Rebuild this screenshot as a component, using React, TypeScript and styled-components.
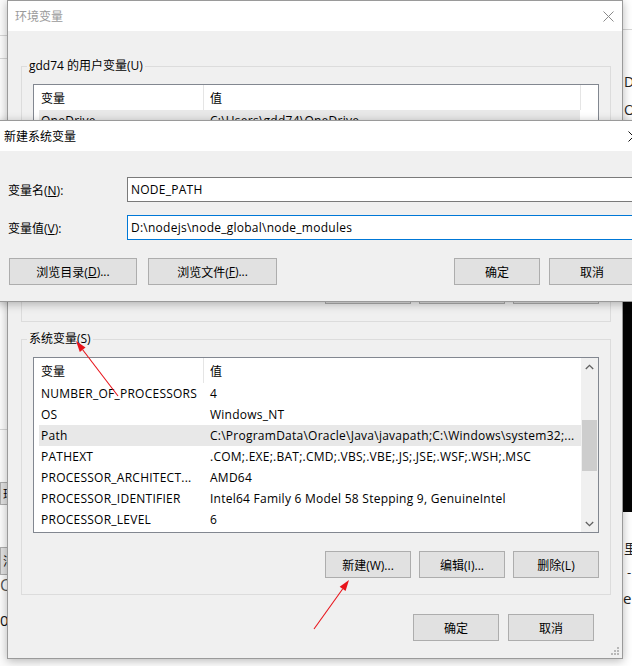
import React from 'react'
import styled, { createGlobalStyle } from 'styled-components'

type EnvVar = {
  readonly name: string
  readonly value: string
  readonly selected?: boolean
}

const userVars: EnvVar[] = [
  { name: 'OneDrive', value: 'C:\\Users\\gdd74\\OneDrive', selected: true },
  { name: 'Path', value: 'C:\\Users\\gdd74\\AppData\\Local\\Microsoft\\WindowsApps;' },
  { name: 'TEMP', value: 'C:\\Users\\gdd74\\AppData\\Local\\Temp' },
  { name: 'TMP', value: 'C:\\Users\\gdd74\\AppData\\Local\\Temp' },
]

const systemVars: EnvVar[] = [
  { name: 'NUMBER_OF_PROCESSORS', value: '4' },
  { name: 'OS', value: 'Windows_NT' },
  { name: 'Path', value: 'C:\\ProgramData\\Oracle\\Java\\javapath;C:\\Windows\\system32;...', selected: true },
  { name: 'PATHEXT', value: '.COM;.EXE;.BAT;.CMD;.VBS;.VBE;.JS;.JSE;.WSF;.WSH;.MSC' },
  { name: 'PROCESSOR_ARCHITECT...', value: 'AMD64' },
  { name: 'PROCESSOR_IDENTIFIER', value: 'Intel64 Family 6 Model 58 Stepping 9, GenuineIntel' },
  { name: 'PROCESSOR_LEVEL', value: '6' },
]

const GlobalStyle = createGlobalStyle`
  html, body { margin: 0; padding: 0; background: #fff; }
  body {
    font-family: 'Open Sans', 'Noto Sans CJK SC', sans-serif;
    font-size: 12px;
    color: #000;
  }
  * { box-sizing: border-box; }
`

const Desktop = styled.div`
  position: relative;
  width: 632px;
  height: 666px;
  overflow: hidden;
  background: #fff;
`

/* windows peeking out behind the dialog */
const LeftBackdrop = styled.div`
  position: absolute;
  left: 0;
  top: 0;
  width: 40px;
  height: 100%;
  display: flex;
  flex-direction: column;
  background: #fbfbfb;
`

const RightBackdrop = styled.div`
  position: absolute;
  left: 590px;
  top: 0;
  width: 42px;
  height: 100%;
  display: flex;
  flex-direction: column;
  background: #fff;
`

const BackRow = styled.div<{ $h: number; $line?: boolean }>`
  flex: none;
  height: ${(p) => p.$h}px;
  border-bottom: ${(p) => (p.$line ? '1px solid #d6d6d6' : 'none')};
`

const BackPanel = styled.div<{ $h?: number; $dark?: boolean }>`
  flex: ${(p) => (p.$h ? 'none' : '1')};
  height: ${(p) => (p.$h ? `${p.$h}px` : 'auto')};
  background: ${(p) => (p.$dark ? '#050505' : 'transparent')};
  display: flex;
  flex-direction: column;
  overflow: hidden;
`

const PeekText = styled.div<{ $top: number; $indent: number; $size?: number; $color?: string }>`
  flex: none;
  margin-top: ${(p) => p.$top}px;
  padding-left: ${(p) => p.$indent}px;
  height: 16px;
  line-height: 16px;
  font-size: ${(p) => p.$size ?? 12}px;
  color: ${(p) => p.$color ?? '#222'};
  white-space: nowrap;
`

const PeekButton = styled.div<{ $top: number; $h: number }>`
  flex: none;
  margin-top: ${(p) => p.$top}px;
  height: ${(p) => p.$h}px;
  display: flex;
  align-items: center;
  padding-left: 2px;
  background: #e1e1e1;
  border: 1px solid #adadad;
  white-space: nowrap;
`

/* generic window chrome */
const Window = styled.section<{ $left: number; $top: number; $w: number; $h?: number; $z: number }>`
  position: absolute;
  left: ${(p) => p.$left}px;
  top: ${(p) => p.$top}px;
  width: ${(p) => p.$w}px;
  height: ${(p) => (p.$h ? `${p.$h}px` : 'auto')};
  z-index: ${(p) => p.$z};
  display: flex;
  flex-direction: column;
  background: #f0f0f0;
  border: 1px solid #9a9a9a;
  box-shadow: 0 2px 9px rgba(0, 0, 0, 0.28);
`

const TitleBar = styled.header<{ $inactive?: boolean }>`
  flex: none;
  height: 30px;
  display: flex;
  align-items: center;
  padding-left: 7px;
  background: #fff;
  color: ${(p) => (p.$inactive ? '#9a9a9a' : '#000')};
`

const TitleText = styled.span`
  flex: 1;
  white-space: nowrap;
`

const CloseButton = styled.div`
  flex: none;
  width: 28px;
  height: 30px;
  display: flex;
  align-items: center;
  justify-content: center;
`

const CloseIcon = ({ color }: { color: string }) => (
  <svg width="11" height="11" viewBox="0 0 11 11">
    <path d="M0.5 0.5 L10.5 10.5 M10.5 0.5 L0.5 10.5" stroke={color} strokeWidth="1" fill="none" />
  </svg>
)

/* main dialog body */
const MainBody = styled.div`
  flex: 1;
  display: flex;
  flex-direction: column;
  padding: 0 11px 0 13px;
  position: relative;
`

const GroupBox = styled.div<{ $top: number; $bottom: number }>`
  margin-top: ${(p) => p.$top}px;
  border: 1px solid #dcdcdc;
  padding: 0 11px ${(p) => p.$bottom}px 11px;
  display: flex;
  flex-direction: column;
`

const GroupCaption = styled.div`
  align-self: flex-start;
  margin: -9px 0 10px -6px;
  padding: 0 2px;
  height: 16px;
  line-height: 16px;
  background: #f0f0f0;
  white-space: nowrap;
`

const ListView = styled.div`
  height: 176px;
  display: flex;
  border: 1px solid #828790;
  background: #fff;
  overflow: hidden;
`

const ListContent = styled.div`
  flex: 1;
  min-width: 0;
  display: flex;
  flex-direction: column;
`

const ListRow = styled.div<{ $header?: boolean; $selected?: boolean }>`
  flex: none;
  display: grid;
  grid-template-columns: 165px 1fr;
  height: ${(p) => (p.$header ? 25 : 21)}px;
  margin-left: 5px;
  align-items: center;
  background: ${(p) => (p.$selected ? '#e8e8e8' : 'transparent')};
  white-space: nowrap;
  letter-spacing: ${(p) => (p.$header ? 0 : 0.25)}px;
`

const HeaderFiller = styled.div`
  flex: none;
  width: 1px;
  height: 25px;
  margin-right: 17px;
  background: #e5e5e5;
`

const NameCell = styled.div<{ $header?: boolean }>`
  height: 100%;
  display: flex;
  align-items: center;
  padding-left: 2px;
  border-right: ${(p) => (p.$header ? '1px solid #e5e5e5' : '1px solid transparent')};
  overflow: hidden;
  text-overflow: ellipsis;
`

const ValueCell = styled.div`
  padding-left: 6px;
  padding-right: 4px;
  overflow: hidden;
  text-overflow: ellipsis;
`

const ScrollBar = styled.div`
  flex: none;
  width: 17px;
  display: flex;
  flex-direction: column;
  background: #f0f0f0;
`

const ScrollArrow = styled.div`
  flex: none;
  height: 17px;
  display: flex;
  align-items: center;
  justify-content: center;
`

const ScrollTrack = styled.div`
  flex: 1;
  display: flex;
  flex-direction: column;
`

const ScrollThumb = styled.div<{ $offset: number; $size: number }>`
  margin: ${(p) => p.$offset}px 1px 0 1px;
  height: ${(p) => p.$size}px;
  background: #cdcdcd;
`

const Chevron = ({ up }: { up?: boolean }) => (
  <svg width="9" height="6" viewBox="0 0 9 6">
    <polyline
      points={up ? '0.8,5 4.5,1.3 8.2,5' : '0.8,1 4.5,4.7 8.2,1'}
      stroke="#606060"
      strokeWidth="1.3"
      fill="none"
    />
  </svg>
)

const ButtonRow = styled.div<{ $top: number; $gap: number; $right?: number }>`
  flex: none;
  display: flex;
  justify-content: flex-end;
  gap: ${(p) => p.$gap}px;
  margin-top: ${(p) => p.$top}px;
  margin-right: ${(p) => p.$right ?? 0}px;
`

const Button = styled.div<{ $w: number }>`
  flex: none;
  width: ${(p) => p.$w}px;
  height: 27px;
  display: flex;
  align-items: center;
  justify-content: center;
  background: #e1e1e1;
  border: 1px solid #adadad;
  white-space: nowrap;
`

const ResizeGrip = styled.svg`
  position: absolute;
  right: 2px;
  bottom: 2px;
`

/* new variable dialog */
const FormBody = styled.div`
  display: flex;
  flex-direction: column;
  padding: 26px 12px 16px 12px;
`

const FieldRow = styled.div<{ $top: number }>`
  display: flex;
  align-items: center;
  margin-top: ${(p) => p.$top}px;
`

const FieldLabel = styled.div`
  flex: none;
  width: 119px;
  margin-left: -1px;
  white-space: nowrap;
`

const TextBox = styled.div<{ $focused?: boolean }>`
  flex: 1;
  height: 25px;
  display: flex;
  align-items: center;
  padding-left: 3px;
  background: #fff;
  border: 1px solid ${(p) => (p.$focused ? '#0078d7' : '#7a7a7a')};
  white-space: nowrap;
  letter-spacing: 0.25px;
`

const DialogButtons = styled.div`
  display: flex;
  align-items: center;
  gap: 11px;
  margin-top: 18px;
`

const Spacer = styled.div`
  flex: 1;
`

const ConfirmGroup = styled.div`
  display: flex;
  gap: 9px;
`

const Annotations = styled.svg`
  position: absolute;
  left: 0;
  top: 0;
  z-index: 10;
  pointer-events: none;
`

const Arrow = ({ from, to }: { from: [number, number]; to: [number, number] }) => {
  const dx = to[0] - from[0]
  const dy = to[1] - from[1]
  const len = Math.hypot(dx, dy)
  const ux = dx / len
  const uy = dy / len
  const bx = to[0] - ux * 11
  const by = to[1] - uy * 11
  const px = -uy * 3.6
  const py = ux * 3.6
  return (
    <g>
      <line x1={from[0]} y1={from[1]} x2={bx} y2={by} stroke="#e8141b" strokeWidth="1.1" />
      <polygon points={`${to[0]},${to[1]} ${bx + px},${by + py} ${bx - px},${by - py}`} fill="#e8141b" />
    </g>
  )
}

const VarList = ({ vars, scroll }: { vars: EnvVar[]; scroll?: boolean }) => (
  <ListView>
    <ListContent>
      <ListRow $header>
        <NameCell $header>变量</NameCell>
        <ValueCell>值</ValueCell>
      </ListRow>
      {vars.map((v) => (
        <ListRow key={v.name} $selected={v.selected}>
          <NameCell>{v.name}</NameCell>
          <ValueCell>{v.value}</ValueCell>
        </ListRow>
      ))}
    </ListContent>
    {scroll ? (
      <ScrollBar>
        <ScrollArrow>
          <Chevron up />
        </ScrollArrow>
        <ScrollTrack>
          <ScrollThumb $offset={45} $size={51} />
        </ScrollTrack>
        <ScrollArrow>
          <Chevron />
        </ScrollArrow>
      </ScrollBar>
    ) : (
      <HeaderFiller />
    )}
  </ListView>
)

export default function App() {
  return (
    <Desktop>
      <GlobalStyle />

      <LeftBackdrop>
        <BackRow $h={36} $line />
        <BackRow $h={23} $line />
        <BackRow $h={371} $line />
        <PeekButton $top={52} $h={23}>
          环境
        </PeekButton>
        <PeekButton $top={42} $h={28}>
          消息
        </PeekButton>
        <PeekText $top={2} $indent={0} $size={16} $color="#555">
          C
        </PeekText>
        <PeekText $top={19} $indent={0} $size={15} $color="#111">
          0:
        </PeekText>
      </LeftBackdrop>

      <RightBackdrop>
        <BackPanel $h={302}>
          <BackRow $h={30} $line />
          <PeekText $top={44} $indent={34} $size={14}>
            Do
          </PeekText>
          <PeekText $top={12} $indent={34} $size={14}>
            O
          </PeekText>
        </BackPanel>
        <BackPanel $h={210} $dark />
        <BackPanel>
          <PeekText $top={28} $indent={34} $size={13}>
            里-
          </PeekText>
          <PeekText $top={8} $indent={37} $size={13}>
            -
          </PeekText>
          <PeekText $top={10} $indent={33} $size={15}>
            e
          </PeekText>
        </BackPanel>
      </RightBackdrop>

      <Window $left={7} $top={0} $w={616} $h={659} $z={2}>
        <TitleBar $inactive>
          <TitleText>环境变量</TitleText>
          <CloseButton>
            <CloseIcon color="#8a8a8a" />
          </CloseButton>
        </TitleBar>
        <MainBody>
          <GroupBox $top={35} $bottom={17}>
            <GroupCaption>gdd74 的用户变量(U)</GroupCaption>
            <VarList vars={userVars} />
            <ButtonRow $top={17} $gap={8}>
              <Button $w={86}>新建(N)...</Button>
              <Button $w={86}>编辑(E)...</Button>
              <Button $w={86}>删除(D)</Button>
            </ButtonRow>
          </GroupBox>
          <GroupBox $top={17} $bottom={16}>
            <GroupCaption>系统变量(S)</GroupCaption>
            <VarList vars={systemVars} scroll />
            <ButtonRow $top={18} $gap={8}>
              <Button $w={86}>新建(W)...</Button>
              <Button $w={86}>编辑(I)...</Button>
              <Button $w={86}>删除(L)</Button>
            </ButtonRow>
          </GroupBox>
          <ButtonRow $top={19} $gap={9} $right={17}>
            <Button $w={86}>确定</Button>
            <Button $w={86}>取消</Button>
          </ButtonRow>
          <ResizeGrip width="10" height="10" viewBox="0 0 10 10">
            {[
              [8, 2],
              [8, 5],
              [5, 5],
              [8, 8],
              [5, 8],
              [2, 8],
            ].map(([x, y]) => (
              <rect key={`${x}-${y}`} x={x - 1} y={y - 1} width="2" height="2" fill="#b8b8b8" />
            ))}
          </ResizeGrip>
        </MainBody>
      </Window>

      <Window $left={-4} $top={120} $w={652} $z={3}>
        <TitleBar>
          <TitleText>新建系统变量</TitleText>
          <CloseButton>
            <CloseIcon color="#111" />
          </CloseButton>
        </TitleBar>
        <FormBody>
          <FieldRow $top={0}>
            <FieldLabel>
              变量名(<u>N</u>):
            </FieldLabel>
            <TextBox>NODE_PATH</TextBox>
          </FieldRow>
          <FieldRow $top={13}>
            <FieldLabel>
              变量值(<u>V</u>):
            </FieldLabel>
            <TextBox $focused>D:\nodejs\node_global\node_modules</TextBox>
          </FieldRow>
          <DialogButtons>
            <Button $w={128}>
              浏览目录(<u>D</u>)...
            </Button>
            <Button $w={129}>
              浏览文件(<u>F</u>)...
            </Button>
            <Spacer />
            <ConfirmGroup>
              <Button $w={86}>确定</Button>
              <Button $w={86}>取消</Button>
            </ConfirmGroup>
          </DialogButtons>
        </FormBody>
      </Window>

      <Annotations width="632" height="666" viewBox="0 0 632 666">
        <Arrow from={[118, 396]} to={[76, 341]} />
        <Arrow from={[314, 629]} to={[349, 580]} />
      </Annotations>
    </Desktop>
  )
}
